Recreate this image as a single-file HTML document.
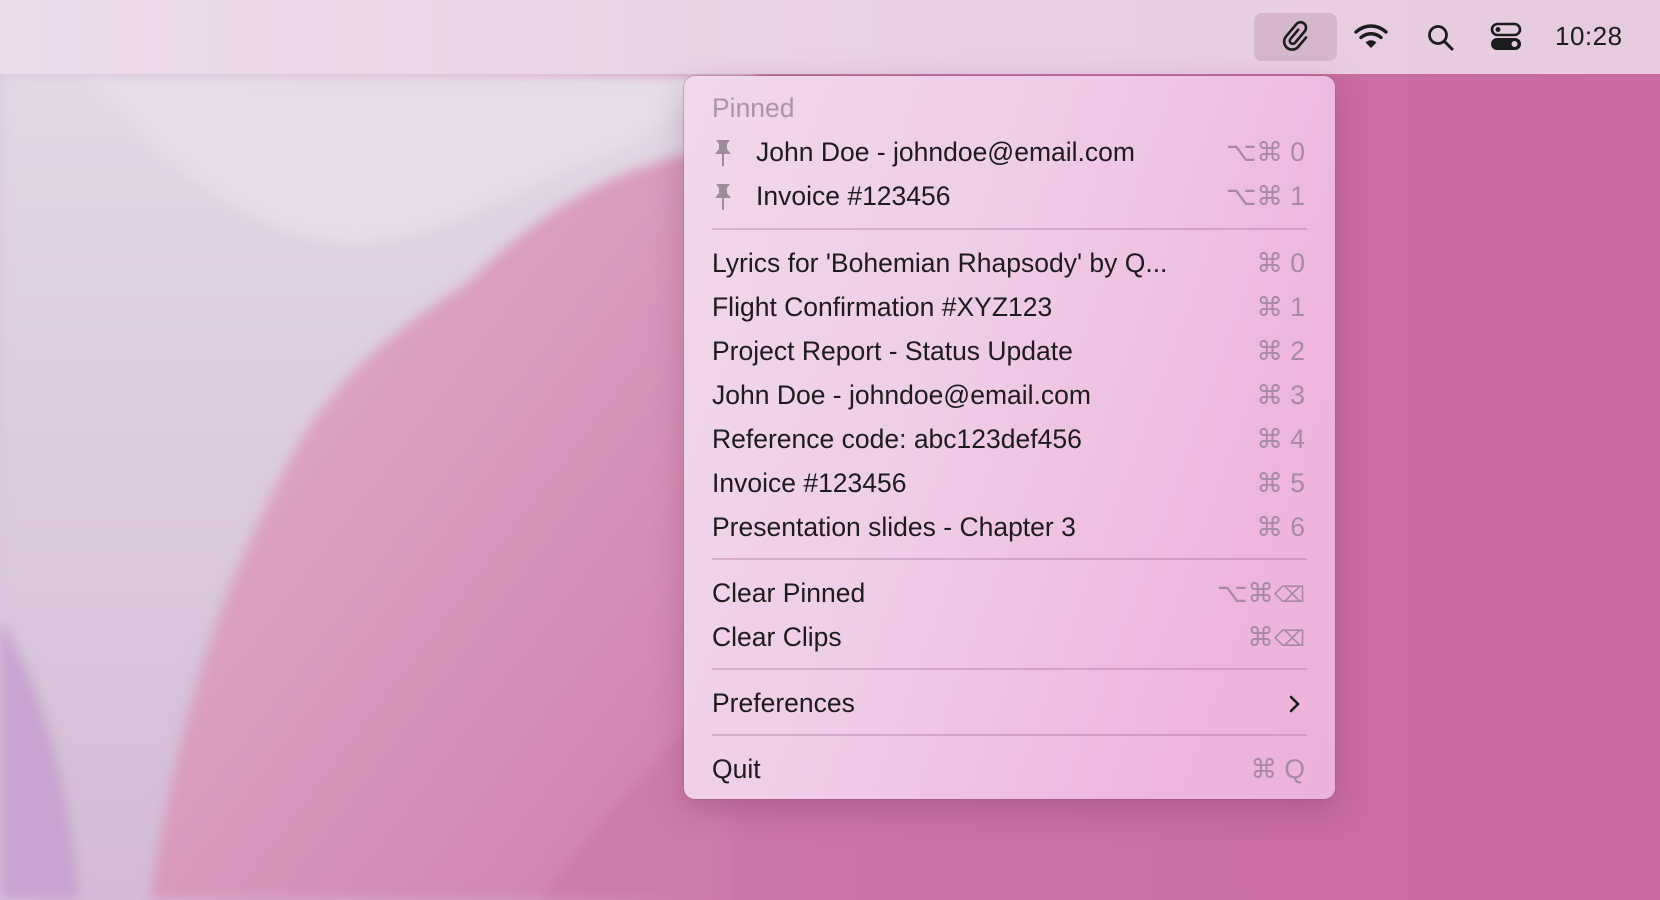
<!DOCTYPE html>
<html><head><meta charset="utf-8"><style>
*{margin:0;padding:0;box-sizing:border-box}
body{width:1660px;height:900px;overflow:hidden;position:relative;font-family:"Liberation Sans","DejaVu Sans",sans-serif;background:#c96c9f}
.bg{position:absolute;inset:0}
.bar{position:absolute;left:0;top:0;width:1660px;height:74px;background:linear-gradient(90deg,#ecdcec,#e8d0e4 60%,#e7cae0);}
.hl{position:absolute;left:1254px;top:13px;width:83px;height:48px;border-radius:8px;background:#d6b6cc}
.time{position:absolute;left:1555px;top:21px;font-size:26px;color:#1c1c1c;letter-spacing:0.5px}
.menu{position:absolute;left:684px;top:76px;width:651px;height:723px;border-radius:11px;background:linear-gradient(110deg,#f0d8ec 0%,#efcde7 40%,#eeb6dd 80%,#ecb3da 100%);box-shadow:0 0 0 1px rgba(150,90,130,.35),0 10px 30px rgba(100,30,70,.25)}
.row{position:absolute;left:28px;right:28px;height:34px;font-size:26.5px;color:#1e1a1e;line-height:34px;white-space:nowrap}
.row .k{position:absolute;right:2px;top:0;color:#a58aa0;letter-spacing:0px}
.hdr{color:#a995a6}
.sep{position:absolute;left:28px;right:28px;height:2px;background:rgba(160,110,145,.35)}
.pin{position:absolute;left:0;top:3px}
</style></head><body>
<svg class="bg" width="1660" height="900" viewBox="0 0 1660 900">
<defs>
<linearGradient id="g0" x1="0" y1="0" x2="1" y2="0"><stop offset="0" stop-color="#d8c4dc"/><stop offset=".3" stop-color="#d7a5c6"/><stop offset=".45" stop-color="#cb74a6"/><stop offset="1" stop-color="#c96aa0"/></linearGradient>
<linearGradient id="g1" x1="0" y1="0" x2="0" y2="1"><stop offset="0" stop-color="#e2d8e5"/><stop offset="1" stop-color="#d4bcd6"/></linearGradient>
<linearGradient id="g2" x1="0" y1="0" x2="1" y2="1"><stop offset="0" stop-color="#e0b3cc"/><stop offset="1" stop-color="#cf7eac"/></linearGradient>
<filter id="b"><feGaussianBlur stdDeviation="6"/></filter>
</defs>
<rect width="1660" height="900" fill="url(#g0)"/>
<g filter="url(#b)">
<path d="M0 74 H760 L700 150 C620 180 540 230 470 280 C380 340 300 430 240 560 C190 670 160 790 150 900 H0Z" fill="url(#g1)"/>
<path d="M80 74 C150 150 230 220 320 240 C420 260 520 180 620 150 L740 74Z" fill="#e6dde8"/>
<path d="M470 280 C540 210 610 170 700 150 L720 150 L720 900 H150 C170 760 220 580 300 440 C350 360 410 320 470 280Z" fill="url(#g2)"/>
<path d="M0 620 C50 700 70 800 80 900 H0Z" fill="#c7a3cf"/>
<path d="M540 900 C600 820 650 760 720 700 L720 900Z" fill="#cd7ba9"/>
</g>
</svg>
<div class="bar"></div>
<div class="hl"></div>
<svg style="position:absolute;left:1278px;top:18px" width="36" height="38" viewBox="0 0 36 38"><g transform="rotate(40 18 19)"><path d="M15 12 V24 a3 3 0 0 0 6 0 V9 a5.5 5.5 0 0 0 -11 0 V25 a8 8 0 0 0 16 0 V13" fill="none" stroke="#1c1c1c" stroke-width="2.6" stroke-linecap="round"/></g></svg>
<svg style="position:absolute;left:1353px;top:22px" width="36" height="28" viewBox="0 0 36 28"><path d="M3 10 C12 2 24 2 33 10" fill="none" stroke="#1c1c1c" stroke-width="3.4" stroke-linecap="round"/><path d="M8 15.5 C14 10.5 22 10.5 28 15.5" fill="none" stroke="#1c1c1c" stroke-width="3.4" stroke-linecap="round"/><path d="M12.5 20.5 L18 26 L23.5 20.5 C20 17.5 16 17.5 12.5 20.5Z" fill="#1c1c1c"/></svg>
<svg style="position:absolute;left:1426px;top:23px" width="30" height="30" viewBox="0 0 30 30"><circle cx="12" cy="12" r="8.5" fill="none" stroke="#1c1c1c" stroke-width="2.8"/><path d="M18.5 18.5 L26 26" stroke="#1c1c1c" stroke-width="3" stroke-linecap="round"/></svg>
<svg style="position:absolute;left:1490px;top:22px" width="32" height="30" viewBox="0 0 32 30"><rect x="2" y="2" width="28" height="11" rx="5.5" fill="none" stroke="#1c1c1c" stroke-width="2.6"/><circle cx="8" cy="7.5" r="2.5" fill="#1c1c1c"/><rect x="1" y="16" width="30" height="12" rx="6" fill="#1c1c1c"/><circle cx="24.5" cy="22" r="3" fill="#e6cde2"/></svg>
<div class="time">10:28</div>

<div class="menu">
<div class="row hdr" style="top:15px">Pinned</div>
<div class="row" style="top:59px"><svg class="pin" width="22" height="30" viewBox="0 0 22 30"><path d="M4 2 H18 L15 6 V11 L19 16 H3 L7 11 V6Z" fill="#9e8c9b"/><path d="M11 16 V28" stroke="#9e8c9b" stroke-width="2"/></svg><span style="margin-left:44px">John Doe - johndoe@email.com</span><span class="k">⌥⌘ 0</span></div>
<div class="row" style="top:103px"><svg class="pin" width="22" height="30" viewBox="0 0 22 30"><path d="M4 2 H18 L15 6 V11 L19 16 H3 L7 11 V6Z" fill="#9e8c9b"/><path d="M11 16 V28" stroke="#9e8c9b" stroke-width="2"/></svg><span style="margin-left:44px">Invoice #123456</span><span class="k">⌥⌘ 1</span></div>
<div class="sep" style="top:152px"></div>
<div class="row" style="top:170px">Lyrics for 'Bohemian Rhapsody' by Q...<span class="k">⌘ 0</span></div>
<div class="row" style="top:214px">Flight Confirmation #XYZ123<span class="k">⌘ 1</span></div>
<div class="row" style="top:258px">Project Report - Status Update<span class="k">⌘ 2</span></div>
<div class="row" style="top:302px">John Doe - johndoe@email.com<span class="k">⌘ 3</span></div>
<div class="row" style="top:346px">Reference code: abc123def456<span class="k">⌘ 4</span></div>
<div class="row" style="top:390px">Invoice #123456<span class="k">⌘ 5</span></div>
<div class="row" style="top:434px">Presentation slides - Chapter 3<span class="k">⌘ 6</span></div>
<div class="sep" style="top:482px"></div>
<div class="row" style="top:500px">Clear Pinned<span class="k">⌥⌘<span style="font-size:22px">⌫</span></span></div>
<div class="row" style="top:544px">Clear Clips<span class="k">⌘<span style="font-size:22px">⌫</span></span></div>
<div class="sep" style="top:592px"></div>
<div class="row" style="top:610px">Preferences<svg style="position:absolute;right:6px;top:9px" width="12" height="18" viewBox="0 0 12 18"><path d="M2 2 L9 9 L2 16" fill="none" stroke="#1e1a1e" stroke-width="2.6" stroke-linecap="round"/></svg></div>
<div class="sep" style="top:658px"></div>
<div class="row" style="top:676px">Quit<span class="k">⌘ Q</span></div>
</div>
</body></html>
